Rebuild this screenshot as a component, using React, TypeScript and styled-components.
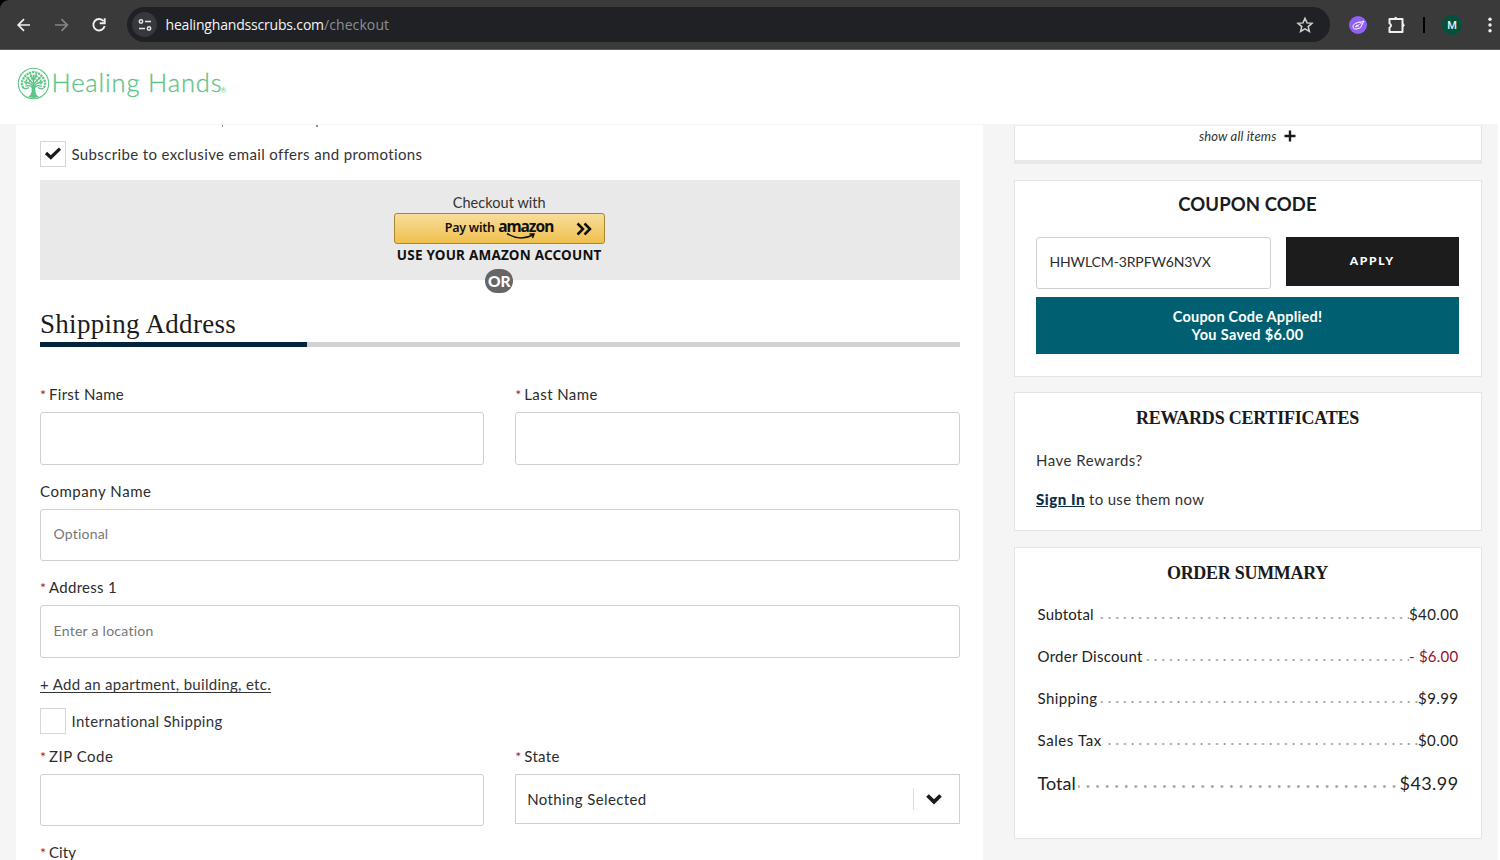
import React from 'react';
import styled, { createGlobalStyle, css } from 'styled-components';

const sans = `Lato, "Liberation Sans", sans-serif`;
const serif = `"Liberation Serif", serif`;

const Global = createGlobalStyle`
  * { box-sizing: border-box; }
  body { margin: 0; background: #fff; font-family: ${sans}; font-size: 15px; color: #333; }
  input, button { font: inherit; }
`;

const Screen = styled.div`
  width: 1500px;
  height: 860px;
  overflow: hidden;
  display: flex;
  flex-direction: column;
`;

/* Browser bar */
const BrowserFrame = styled.div`
  background: #000;
  flex: none;
`;
const BrowserBar = styled.div`
  height: 50px;
  padding-left: 15px;
  display: flex;
  align-items: center;
  background: #3a3a3a;
  border-bottom: 1px solid #5a5a5a;
  border-top-left-radius: 9px;
`;
const NavIcons = styled.div`
  display: flex;
  gap: 19.5px;
  width: 112px;
`;
const AddressBar = styled.div`
  width: 1203px;
  height: 35px;
  border-radius: 18px;
  background: #202125;
  display: flex;
  align-items: center;
  padding: 0 16px 0 5px;
`;
const SiteChip = styled.div`
  width: 25px;
  height: 25px;
  border-radius: 50%;
  background: #37383b;
  display: grid;
  place-items: center;
  margin-right: 8.5px;
`;
const Url = styled.div`
  flex: 1;
  font-family: "Open Sans", sans-serif;
  font-size: 14px;
  line-height: 20px;
  color: #8e8f92;
  white-space: nowrap;
`;
const Host = styled.span`
  color: #f4f4f4;
`;
const Extensions = styled.div`
  display: flex;
  align-items: center;
  padding-left: 18.5px;
`;
const ExtBadge = styled.div`
  width: 18px;
  height: 18px;
  border-radius: 50%;
  background: #9160f5;
  display: grid;
  place-items: center;
  margin-right: 19.5px;
`;
const BarDivider = styled.div`
  width: 2px;
  height: 16px;
  background: #000;
  margin: 0 17px 0 16px;
`;
const Avatar = styled.div`
  width: 20px;
  height: 20px;
  border-radius: 50%;
  background: #03503f;
  color: #e6f2ee;
  font: 500 11px/21px Roboto, sans-serif;
  text-align: center;
  margin-right: 25px;
`;

/* Site header */
const SiteHeader = styled.header`
  flex: none;
  height: 74px;
  padding: 16.5px 0 0 16.5px;
  display: flex;
  align-items: flex-start;
  background: #fff;
`;
const Wordmark = styled.span`
  font-size: 25.5px;
  line-height: 31px;
  font-weight: 300;
  color: #5fc487;
  -webkit-text-stroke: 0.3px #5fc487;
  margin-left: 2px;
  width: 169px;
  white-space: nowrap;
`;
const Registered = styled.span`
  font-size: 7px;
  color: #6bca90;
  margin-top: 19px;
`;

/* Page */
const Page = styled.div`
  flex: 1;
  min-height: 0;
  width: 1498px;
  background: #f5f5f5;
  padding-left: 16px;
  display: flex;
  gap: 31px;
  overflow: hidden;
`;
const Main = styled.main`
  width: 967px;
  height: 760px;
  margin-top: 1px;
  background: #fff;
  padding: 0 23.5px 0 24px;
`;
const ClippedLine = styled.div`
  height: 16px;
  padding-left: 181.5px;
  display: flex;
  gap: 93px;
`;
const Descender = styled.span`
  width: 1.5px;
  height: 2px;
  background: #a58080;
`;
const CheckRow = styled.label`
  display: flex;
  align-items: center;
  height: 26px;
  gap: 5.5px;
  white-space: nowrap;
  & > span:last-child:not(:first-child) { padding-bottom: 1px; }
`;
const CheckBox = styled.span`
  width: 26px;
  height: 26px;
  border: 1px solid #d6d6d6;
  display: grid;
  place-items: center;
`;
const AmazonPanel = styled.section`
  margin-top: 13px;
  height: 100px;
  background: #e9e9e9;
  display: flex;
  flex-direction: column;
  align-items: center;
  padding: 13px 1px 0 0;
`;
const AmazonLead = styled.div`
  height: 21px;
  font-size: 14.5px;
  line-height: 20px;
`;
const AmazonButton = styled.button`
  width: 211px;
  height: 31px;
  flex: none;
  border: 1px solid #a88734;
  border-radius: 3px;
  background: linear-gradient(#f8dd9b, #f0c04d);
  display: flex;
  align-items: flex-start;
  padding: 5px 0 0 50px;
  color: #111;
  font: 600 12.5px/18px "Noto Sans", sans-serif;
  white-space: nowrap;
`;
const AmazonBrand = styled.span`
  position: relative;
  width: 55px;
  margin-left: 3.5px;
  font-weight: 700;
  font-size: 15.5px;
  line-height: 15px;
  svg { position: absolute; left: 8px; top: 12.5px; }
`;
const ChevronSlot = styled.span`
  margin: 3px 0 0 22.5px;
  line-height: 0;
`;
const AmazonNote = styled.div`
  font: 700 13.5px/20px "Noto Sans", sans-serif;
  color: #111;
  margin-top: 0.5px;
  white-space: nowrap;
`;
const OrPill = styled.div`
  flex: none;
  margin-top: 4px;
  width: 28px;
  height: 24px;
  border-radius: 12px;
  background: #666;
  color: #fff;
  font-weight: 900;
  font-size: 15.5px;
  line-height: 24px;
  text-align: center;
`;
const SectionTitle = styled.h2`
  margin: 28px 0 0;
  font: 400 27px/32px ${serif};
  height: 34px;
  color: #1c1c1c;
  white-space: nowrap;
`;
const Progress = styled.div`
  height: 5px;
  background: #d2d2d2;
  &::before {
    content: '';
    display: block;
    width: 267px;
    height: 5px;
    background: #04233d;
  }
`;
const Form = styled.form`
  padding-top: 37px;
`;
const FieldRow = styled.div<{ $cols?: number }>`
  display: grid;
  grid-template-columns: repeat(${p => p.$cols || 1}, 1fr);
  column-gap: 31px;
  height: 96.7px;
`;
const Field = styled.div`
  display: flex;
  flex-direction: column;
`;
const Label = styled.label`
  height: 28px;
  line-height: 20px;
  color: #2c2c2c;
  white-space: nowrap;
`;
const Star = styled.span`
  color: #9b1c31;
  font-size: 14px;
  display: inline-block;
  width: 9px;
`;
const boxed = css`
  width: 100%;
  border: 1px solid #d0d0d0;
  background: #fff;
`;
const Input = styled.input<{ $ls?: number }>`
  ${boxed}
  height: 52.6px;
  border-radius: 3px;
  padding: 0 12.5px 2px;
  font-size: 14px;
  color: #2c2c2c;
  outline: none;
  letter-spacing: ${p => p.$ls || 0}px;
  &::placeholder { color: #767676; opacity: 1; }
`;
const Select = styled.div`
  ${boxed}
  height: 50px;
  display: flex;
  align-items: center;
  padding: 0 15.5px 0 11px;
  color: #2c2c2c;
`;
const SelectArrow = styled.span`
  margin-left: auto;
  height: 22px;
  padding-left: 11.5px;
  border-left: 1px solid #ddd;
  display: flex;
  align-items: center;
`;
const AddLink = styled.a`
  display: block;
  height: 34.2px;
  line-height: 21px;
  text-decoration: underline;
  text-decoration-skip-ink: none;
  text-underline-offset: 1.5px;
  white-space: nowrap;
`;
const IntlRow = styled.div`
  height: 37.5px;
`;

/* Sidebar */
const Sidebar = styled.aside`
  width: 467.5px;
  display: flex;
  flex-direction: column;
  gap: 15.5px;
`;
const Card = styled.section<{ $h: number }>`
  background: #fff;
  border: 1px solid #e4e4e4;
  height: ${p => p.$h}px;
  flex: none;
  padding: 0 21.5px 0 21px;
`;
const ItemsCard = styled(Card)`
  border-top-color: #eee;
  border-bottom: 4px solid #e8e8e8;
  display: flex;
  justify-content: center;
  gap: 7.5px;
  font-style: italic;
  font-size: 13px;
  line-height: 20px;
  margin-top: 1px;
`;
const PlusSlot = styled.span`
  padding-top: 4px;
  line-height: 0;
`;
const CardTitle = styled.h3<{ $serif?: boolean }>`
  margin: 0;
  height: 36px;
  padding-top: ${p => (p.$serif ? 13 : 11)}px;
  font: 700 ${p => (p.$serif ? `18px/24px ${serif}` : `18.5px/24px ${sans}`)};
  color: #1b1b1b;
  text-align: center;
  white-space: nowrap;
`;
const CouponRow = styled.div`
  display: grid;
  grid-template-columns: 234.5px 173.5px;
  justify-content: space-between;
  margin-top: 20px;
`;
const Apply = styled.button`
  height: 49px;
  border: 0;
  background: #1c1c1c;
  color: #fff;
  font-weight: 900;
  font-size: 12px;
  letter-spacing: 1.7px;
  padding-bottom: 3px;
`;
const Applied = styled.div`
  margin-top: 8.4px;
  height: 56.5px;
  padding-top: 10.5px;
  background: #005f70;
  color: #fff;
  font-weight: 700;
  font-size: 14.5px;
  line-height: 18px;
  text-align: center;
`;
const Para = styled.p<{ $top: number }>`
  margin: ${p => p.$top}px 0 0;
  line-height: 20px;
  white-space: nowrap;
`;
const SignIn = styled.a`
  font-weight: 900;
  color: #0b2c48;
  text-decoration: underline;
`;
const SummaryList = styled.div`
  padding: 21px 0.5px 0 1.5px;
`;
const SummaryRow = styled.div<{ $red?: boolean }>`
  display: flex;
  justify-content: space-between;
  height: 20px;
  line-height: 19px;
  margin-bottom: 22px;
  color: #222;
  background: radial-gradient(circle at 2.5px 2px, #999 0.5px, transparent 1.5px) 0 11px / 7.68px 4px repeat-x;
  & > span { background: #fff; }
  & > span:first-child { padding-right: 2px; }
  & > span:last-child { color: ${p => (p.$red ? '#8f1230' : '#222')}; }
`;
const TotalRow = styled(SummaryRow)`
  font-size: 18px;
  padding-top: 1px;
  background: radial-gradient(circle at 2.2px 2.5px, #999 0.8px, transparent 1.8px) 0 11px / 9.57px 5px repeat-x;
`;
const T = styled.span<{ $ls?: number }>`
  letter-spacing: ${p => p.$ls || 0}px;
`;

const Tree = () => (
  <svg width="33" height="33" viewBox="0 0 33 33" fill="none" stroke="#5fc487">
    <circle cx="16.5" cy="16.5" r="15.2" strokeWidth="1.1" />
    <path d="M15 18 L14.5 25 Q14 28.5 11 29.8 Q16.5 32 22 29.8 Q19 28.5 18.5 25 L18 18 Z" fill="#5fc487" stroke="none" />
    <path d="M16.5 21V9M16.3 22Q14 17 8 19.5M16.7 22Q19 17 25 19.5M16 19Q12.5 15 7 15M17 19Q20.5 15 26 15M16.2 17Q12 12.5 9.5 10M16.8 17Q21 12.5 23.5 10M16.4 14L13.5 7M16.6 14L19.5 7" strokeWidth="1.3" />
    <g strokeDasharray="2.2 0.8">
      <path d="M6.5 21Q3.5 17 6 12.5Q9 6 16.5 5Q24 6 27 12.5Q29.5 17 26.5 21" strokeWidth="2.2" />
      <path d="M9.5 17.5Q8 13 12 10.5Q14 8.5 16.5 8.5Q19 8.5 21 10.5Q25 13 23.5 17.5" strokeWidth="1.8" />
      <path d="M12.5 15Q13 11.5 16.5 11.5Q20 11.5 20.5 15" strokeWidth="1.4" />
    </g>
    <path d="M6.5 21Q9 22.8 12 20.5M26.5 21Q24 22.8 21 20.5" strokeWidth="1.5" />
  </svg>
);

export default function App() {
  return (
    <Screen>
      <Global />
      <BrowserFrame>
        <BrowserBar>
          <NavIcons>
            <svg width="18" height="18" viewBox="0 0 18 18" fill="none" stroke="#f0f0f0" strokeWidth="1.7"><path d="M15 9H3.5M9 3.2L3.2 9L9 14.8" /></svg>
            <svg width="18" height="18" viewBox="0 0 18 18" fill="none" stroke="#868686" strokeWidth="1.7"><path d="M2 9H14M8.5 3.2L14.3 9L8.5 14.8" /></svg>
            <svg width="18" height="18" viewBox="0 0 18 18" fill="none" stroke="#f0f0f0" strokeWidth="1.9"><path d="M13.6 5.3A5.7 5.7 0 1 0 14.6 10" /><path d="M14.7 2.2V7.2H9.7" /></svg>
          </NavIcons>
          <AddressBar>
            <SiteChip>
              <svg width="14" height="14" viewBox="0 0 14 14" fill="none" stroke="#e6e6e6" strokeWidth="1.5"><circle cx="3" cy="3.5" r="1.7" /><path d="M7 3.5H13M1 10.5H7" /><circle cx="11" cy="10.5" r="1.7" /></svg>
            </SiteChip>
            <Url><Host><T $ls={-0.18}>healinghandsscrubs.com</T></Host><T $ls={0.1}>/checkout</T></Url>
            <svg width="18" height="18" viewBox="0 0 18 18" fill="none" stroke="#d0d0d0" strokeWidth="1.5"><path d="M9 2.3L11 6.9L16 7.3L12.2 10.6L13.4 15.5L9 12.9L4.6 15.5L5.8 10.6L2 7.3L7 6.9Z" /></svg>
          </AddressBar>
          <Extensions>
            <ExtBadge><svg width="14" height="14" viewBox="0 0 14 14" fill="none" stroke="#fff" strokeWidth="1"><path d="M13 3Q11 4.5 8.5 4L4 5.5Q1.5 7 2 9.5Q3 11.5 6 11Q10.500 10.500 11 6.500L13 3M4 9L8.500 6.500M5 7L7.500 8.800M8.500 4L11 6.500" /></svg></ExtBadge>
            <svg width="21" height="20" viewBox="0 0 21 20" fill="none" stroke="#f0f0f0" strokeWidth="2"><path d="M3.5 4H16.5V17H3.5V12.7Q6.5 10.5 3.5 8.3Z" strokeLinejoin="round" /><path d="M8 3.500Q9.700 1 11.400 3.500ZM17 8.500Q19.500 10.200 17 12Z" fill="#f0f0f0" strokeWidth="1" /></svg>
            <BarDivider />
            <Avatar>M</Avatar>
            <svg width="6" height="18" viewBox="0 0 6 18" fill="#f0f0f0"><circle cx="3" cy="3.3" r="1.7" /><circle cx="3" cy="9" r="1.7" /><circle cx="3" cy="14.7" r="1.7" /></svg>
          </Extensions>
        </BrowserBar>
      </BrowserFrame>
      <SiteHeader>
        <Tree />
        <Wordmark><T $ls={0.85}>Healing Hands</T></Wordmark>
        <Registered>®</Registered>
      </SiteHeader>
      <Page>
        <Main>
          <ClippedLine><Descender /><Descender /></ClippedLine>
          <CheckRow>
            <CheckBox><svg width="18" height="14" viewBox="0 0 18 14" fill="none" stroke="#1b1b1b" strokeWidth="3.2"><path d="M2 6L6.8 10.500L16 1.700" /></svg></CheckBox>
            <T $ls={0.36}>Subscribe to exclusive email offers and promotions</T>
          </CheckRow>
          <AmazonPanel>
            <AmazonLead><T $ls={0.05}>Checkout with</T></AmazonLead>
            <AmazonButton type="button">
              <T $ls={-0.26}>Pay with</T>
              <AmazonBrand><T $ls={-1.02}>amazon</T>
                <svg width="36" height="8" viewBox="0 0 36 8" fill="none" stroke="#111" strokeWidth="1.5"><path d="M1 1.5Q14 9.5 27 3M23.5 2L28 2L26.5 6" /></svg>
              </AmazonBrand>
              <ChevronSlot><svg width="16" height="14" viewBox="0 0 16 14" fill="none" stroke="#111" strokeWidth="2.5"><path d="M1.5 1.5L7 7L1.5 12.5M8.5 1.5L14 7L8.5 12.5" /></svg></ChevronSlot>
            </AmazonButton>
            <AmazonNote><T $ls={0.21}>USE YOUR AMAZON ACCOUNT</T></AmazonNote>
            <OrPill>OR</OrPill>
          </AmazonPanel>
          <SectionTitle><T $ls={0.3}>Shipping Address</T></SectionTitle>
          <Progress />
          <Form>
            <FieldRow $cols={2}>
              <Field><Label><Star>*</Star><T $ls={0.29}>First Name</T></Label><Input /></Field>
              <Field><Label><Star>*</Star><T $ls={0.41}>Last Name</T></Label><Input /></Field>
            </FieldRow>
            <FieldRow><Field><Label><T $ls={0.55}>Company Name</T></Label><Input placeholder="Optional" $ls={0.2} /></Field></FieldRow>
            <FieldRow><Field><Label><Star>*</Star><T $ls={0.29}>Address 1</T></Label><Input placeholder="Enter a location" $ls={0.27} /></Field></FieldRow>
            <AddLink><T $ls={0.3}>+ Add an apartment, building, etc.</T></AddLink>
            <IntlRow><CheckRow><CheckBox /><T $ls={0.32}>International Shipping</T></CheckRow></IntlRow>
            <FieldRow $cols={2}>
              <Field><Label><Star>*</Star><T $ls={0.5}>ZIP Code</T></Label><Input /></Field>
              <Field><Label><Star>*</Star><T $ls={0.34}>State</T></Label>
                <Select><T $ls={0.38}>Nothing Selected</T><SelectArrow><svg width="18" height="14" viewBox="0 0 18 14" fill="none" stroke="#1b1b1b" strokeWidth="3.8"><path d="M2.5 3.5L9 9.8L15.5 3.5" /></svg></SelectArrow></Select>
              </Field>
            </FieldRow>
            <Label><Star>*</Star><T $ls={0.07}>City</T></Label>
          </Form>
        </Main>
        <Sidebar>
          <ItemsCard $h={39}><T $ls={0.15}>show all items</T><PlusSlot><svg width="12" height="12" viewBox="0 0 12 12" stroke="#1b1b1b" strokeWidth="2.4"><path d="M6 0.5V11.5M0.5 6H11.5" /></svg></PlusSlot></ItemsCard>
          <Card $h={197}>
            <CardTitle><T $ls={0.1}>COUPON CODE</T></CardTitle>
            <CouponRow><Input defaultValue="HHWLCM-3RPFW6N3VX" $ls={-0.13} /><Apply type="button">APPLY</Apply></CouponRow>
            <Applied><T $ls={0.23}>Coupon Code Applied!</T><br /><T $ls={0.34}>You Saved $6.00</T></Applied>
          </Card>
          <Card $h={139}>
            <CardTitle $serif><T $ls={-0.23}>REWARDS CERTIFICATES</T></CardTitle>
            <Para $top={21}><T $ls={0.5}>Have Rewards?</T></Para>
            <Para $top={19}><SignIn><T $ls={0.55}>Sign In</T></SignIn><T $ls={0.3}> to use them now</T></Para>
          </Card>
          <Card $h={292.5}>
            <CardTitle $serif><T $ls={-0.29}>ORDER SUMMARY</T></CardTitle>
            <SummaryList>
              <SummaryRow><T $ls={0.2}>Subtotal</T><T $ls={0.41}>$40.00</T></SummaryRow>
              <SummaryRow $red><T $ls={0.28}>Order Discount</T><T $ls={0.25}>- $6.00</T></SummaryRow>
              <SummaryRow><T $ls={0.42}>Shipping</T><T $ls={0.43}>$9.99</T></SummaryRow>
              <SummaryRow><T $ls={0.6}>Sales Tax</T><T $ls={0.45}>$0.00</T></SummaryRow>
              <TotalRow><T $ls={0}>Total</T><T $ls={0.42}>$43.99</T></TotalRow>
            </SummaryList>
          </Card>
        </Sidebar>
      </Page>
    </Screen>
  );
}
